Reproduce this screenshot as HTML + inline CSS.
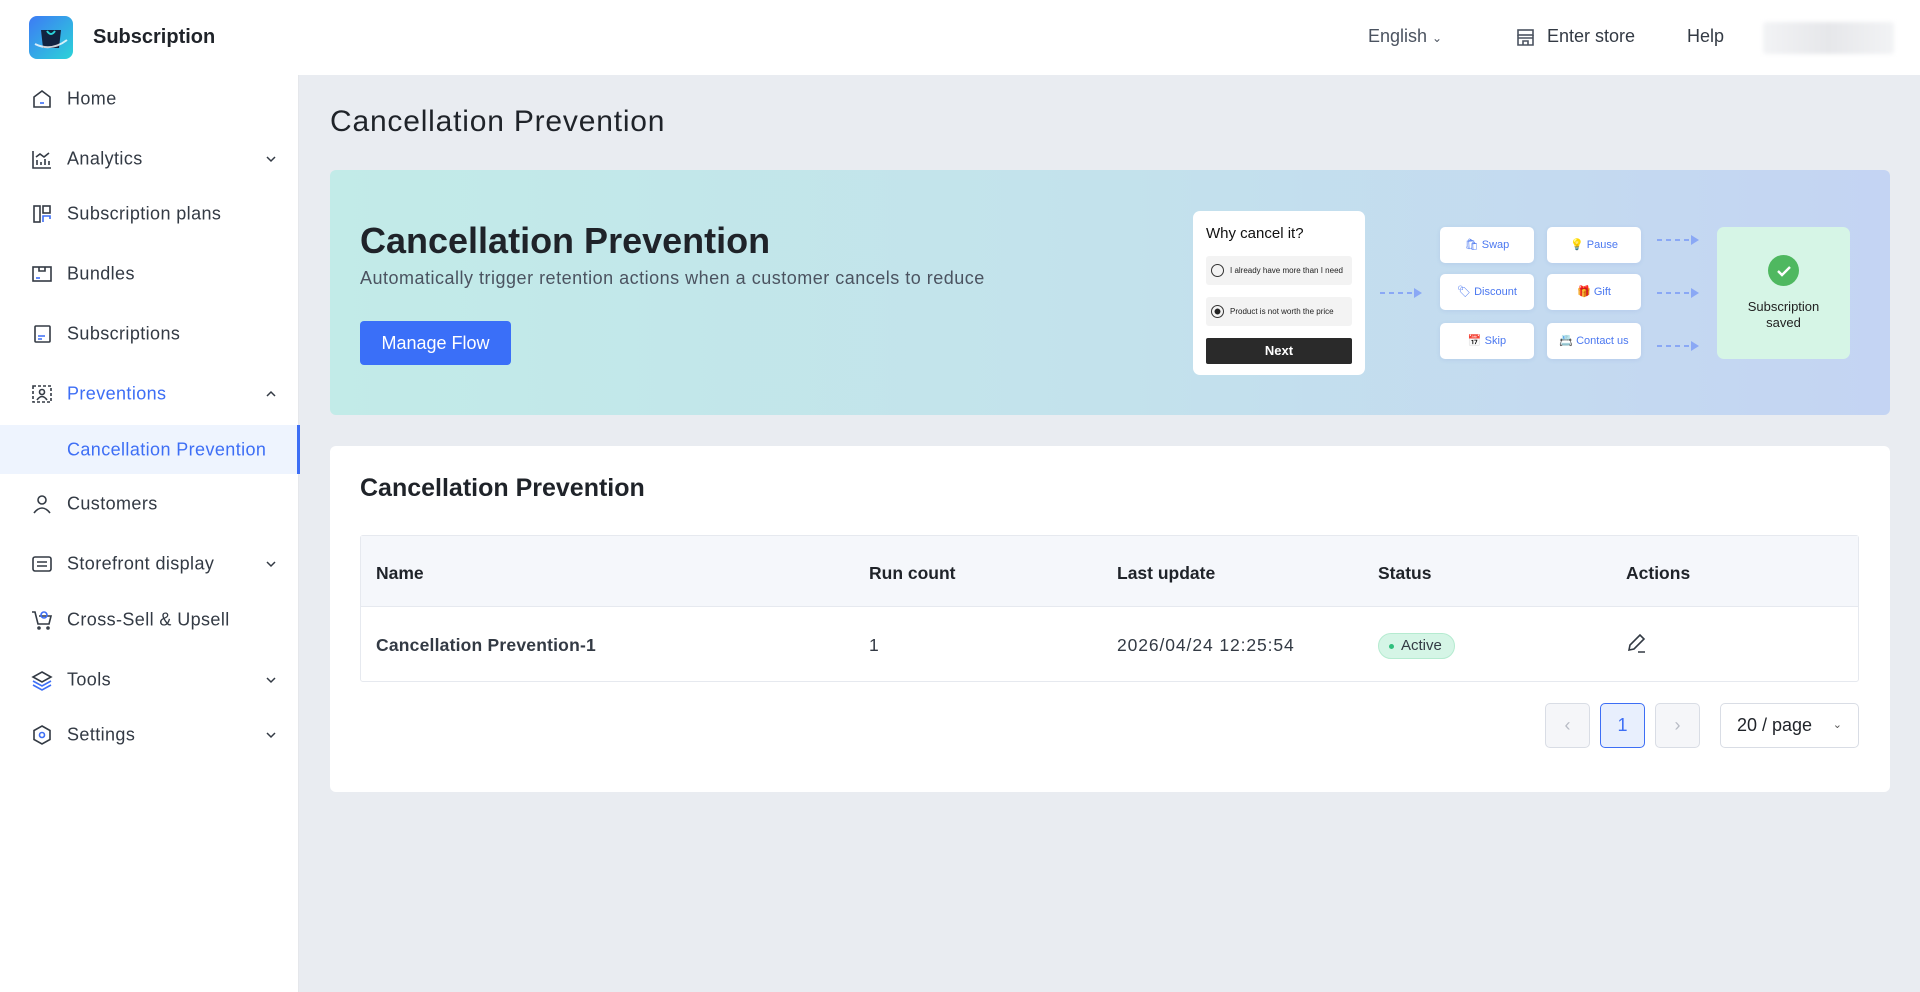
<!DOCTYPE html>
<html><head><meta charset="utf-8"><style>
*{box-sizing:border-box;margin:0;padding:0}
body{width:1920px;height:992px;overflow:hidden;font-family:"Liberation Sans",sans-serif;background:#e9ecf1;color:#1f2329;position:relative}
.hdr{position:absolute;left:0;top:0;width:1920px;height:75px;background:#fff}
.logo{position:absolute;left:29px;top:16px;width:44px;height:43px;border-radius:8px;background:linear-gradient(135deg,#3d7bf5,#2bd3d8)}
.brand{position:absolute;left:93px;top:26px;font-size:20px;font-weight:bold;color:#1f2329}
.hr{position:absolute;top:26px;font-size:18px;color:#333a44}
.side{position:absolute;left:0;top:75px;width:299px;height:917px;background:#fff;border-right:1px solid #e5e7eb}
.mi{position:absolute;left:0;width:299px;height:40px;font-size:18px;letter-spacing:0.4px;color:#333a44}
.mi span.t{position:absolute;left:67px;top:50%;transform:translateY(-50%)}
.mi svg.ic{position:absolute;left:31px;top:50%;margin-top:-11px}
.mi .chev{position:absolute;left:265px;top:50%;margin-top:-6px}
.main-title{position:absolute;left:330px;top:105px;font-size:30px;letter-spacing:0.8px;color:#1f2329}
.banner{position:absolute;left:330px;top:170px;width:1560px;height:245px;border-radius:6px;background:linear-gradient(90deg,#c2ebe8 0%,#c3e2ec 50%,#c4d4f3 100%)}
.card{position:absolute;left:330px;top:446px;width:1560px;height:346px;background:#fff;border-radius:6px}
.box{position:absolute;background:#fff;border-radius:5px;font-size:11px;color:#4b78f0;text-align:center;line-height:37px;box-shadow:0 1px 4px rgba(80,110,200,.12)}
.arrow{position:absolute;width:44px;height:10px}
.th{position:absolute;top:27px;font-size:17.5px;font-weight:bold;color:#1f2329}
.td{position:absolute;top:28px;font-size:17.5px;letter-spacing:0.3px;color:#333a44}
.pg{position:absolute;top:703px;height:45px;border:1px solid #d9dde5;border-radius:5px;background:#f5f6f9;text-align:center;line-height:43px;font-size:18px}
</style></head><body>
<div class="hdr">
 <div class="logo"><svg width="44" height="43" viewBox="0 0 44 43"><path d="M12 14h20l-2 18H14z" fill="#12233f"/><path d="M18 15q4 6 8 0" stroke="#2bd3d8" stroke-width="2" fill="none"/><path d="M6 28q16 8 32-4" stroke="#fff" stroke-width="2" fill="none" opacity=".8"/></svg></div>
 <div class="brand">Subscription</div>
 <div class="hr" style="left:1368px;color:#4b5360">English <span style="font-size:12px">&#8964;</span></div>
 <svg style="position:absolute;left:1516px;top:28px" width="19" height="19" viewBox="0 0 19 19" fill="none" stroke="#4b5360" stroke-width="1.6"><rect x="2" y="2" width="15" height="5"/><path d="M2 7v10h15V7M2 10h15M7 17v-4h5v4"/></svg>
 <div class="hr" style="left:1547px">Enter store</div>
 <div class="hr" style="left:1687px">Help</div>
 <div style="position:absolute;left:1763px;top:22px;width:131px;height:32px;background:linear-gradient(90deg,#f2f3f5,#e6e7ea 50%,#f2f3f5);border-radius:3px;filter:blur(2px)"></div>
</div>
<div class="side">
 <div class="mi" style="top:4px"><svg class="ic" width="22" height="22" viewBox="0 0 22 22" fill="none" stroke="#333a44" stroke-width="1.6"><path d="M3 9l8-6 8 6v10H3z"/><path d="M9 15h4" stroke="#3d6ef5"/></svg><span class="t">Home</span></div>
 <div class="mi" style="top:64px"><svg class="ic" width="22" height="22" viewBox="0 0 22 22" fill="none" stroke="#333a44" stroke-width="1.6"><path d="M2 3v17h18M6 17v-5M10 17v-3M14 17v-6M18 17v-4M5 9l4-3 4 3 5-4"/></svg><span class="t">Analytics</span><svg class="chev" width="12" height="12" viewBox="0 0 12 12"><path d="M2 4l4 4 4-4" stroke="#333a44" stroke-width="1.5" fill="none"/></svg></div>
 <div class="mi" style="top:119px"><svg class="ic" width="22" height="22" viewBox="0 0 22 22" fill="none" stroke="#333a44" stroke-width="1.6"><rect x="3" y="3" width="6" height="16"/><rect x="12" y="3" width="7" height="7"/><path d="M12 19v-6h7v3" stroke="#3d6ef5"/></svg><span class="t">Subscription plans</span></div>
 <div class="mi" style="top:179px"><svg class="ic" width="22" height="22" viewBox="0 0 22 22" fill="none" stroke="#333a44" stroke-width="1.6"><rect x="2" y="4" width="18" height="14"/><path d="M8 4v4h6V4"/><path d="M5 15h4" stroke="#3d6ef5"/></svg><span class="t">Bundles</span></div>
 <div class="mi" style="top:239px"><svg class="ic" width="22" height="22" viewBox="0 0 22 22" fill="none" stroke="#333a44" stroke-width="1.6"><rect x="4" y="3" width="15" height="16" rx="1"/><path d="M7 13h7M7 16h4" stroke="#3d6ef5"/></svg><span class="t">Subscriptions</span></div>
 <div class="mi" style="top:299px;color:#3d6ef5"><svg class="ic" width="22" height="22" viewBox="0 0 22 22" fill="none" stroke="#333a44" stroke-width="1.6"><rect x="2" y="3" width="18" height="16" stroke-dasharray="3 2"/><circle cx="11" cy="9" r="2.5"/><path d="M6 17q5-7 10 0"/></svg><span class="t">Preventions</span><svg class="chev" width="12" height="12" viewBox="0 0 12 12"><path d="M2 8l4-4 4 4" stroke="#333a44" stroke-width="1.5" fill="none"/></svg></div>
 <div class="mi" style="top:350px;height:49px;background:#eef4fe;color:#3d6ef5;border-right:3px solid #3d6ef5;width:300px"><span class="t">Cancellation Prevention</span></div>
 <div class="mi" style="top:409px"><svg class="ic" width="22" height="22" viewBox="0 0 22 22" fill="none" stroke="#333a44" stroke-width="1.6"><circle cx="11" cy="7" r="4"/><path d="M3 20q8-10 16 0"/></svg><span class="t">Customers</span></div>
 <div class="mi" style="top:469px"><svg class="ic" width="22" height="22" viewBox="0 0 22 22" fill="none" stroke="#333a44" stroke-width="1.6"><rect x="2" y="4" width="18" height="14" rx="2"/><path d="M6 9h10M6 13h10"/></svg><span class="t">Storefront display</span><svg class="chev" width="12" height="12" viewBox="0 0 12 12"><path d="M2 4l4 4 4-4" stroke="#333a44" stroke-width="1.5" fill="none"/></svg></div>
 <div class="mi" style="top:525px"><svg class="ic" width="22" height="22" viewBox="0 0 22 22" fill="none" stroke="#333a44" stroke-width="1.6"><path d="M1 3h3l3 12h11l2-8H8"/><circle cx="13" cy="6" r="3" stroke="#3d6ef5"/><circle cx="8" cy="19" r="1"/><circle cx="17" cy="19" r="1"/></svg><span class="t">Cross-Sell &amp; Upsell</span></div>
 <div class="mi" style="top:585px"><svg class="ic" width="22" height="22" viewBox="0 0 22 22" fill="none" stroke="#333a44" stroke-width="1.6"><path d="M11 3l9 5-9 5-9-5z"/><path d="M2 12l9 5 9-5M2 16l9 5 9-5" stroke="#3d6ef5"/></svg><span class="t">Tools</span><svg class="chev" width="12" height="12" viewBox="0 0 12 12"><path d="M2 4l4 4 4-4" stroke="#333a44" stroke-width="1.5" fill="none"/></svg></div>
 <div class="mi" style="top:640px"><svg class="ic" width="22" height="22" viewBox="0 0 22 22" fill="none" stroke="#333a44" stroke-width="1.6"><path d="M11 2l8 4.5v9L11 20l-8-4.5v-9z"/><circle cx="11" cy="11" r="2.5" stroke="#3d6ef5"/></svg><span class="t">Settings</span><svg class="chev" width="12" height="12" viewBox="0 0 12 12"><path d="M2 4l4 4 4-4" stroke="#333a44" stroke-width="1.5" fill="none"/></svg></div>
</div>
<div class="main-title">Cancellation Prevention</div>
<div class="banner">
 <div style="position:absolute;left:30px;top:50px;font-size:36px;font-weight:bold;color:#1f2329">Cancellation Prevention</div>
 <div style="position:absolute;left:30px;top:98px;font-size:18px;letter-spacing:0.5px;color:#4b5360">Automatically trigger retention actions when a customer cancels to reduce</div>
 <div style="position:absolute;left:30px;top:151px;width:151px;height:44px;border-radius:4px;background:#3a6ff8;color:#fff;font-size:18px;text-align:center;line-height:44px">Manage Flow</div>
 <div style="position:absolute;left:863px;top:41px;width:172px;height:164px;background:#fff;border-radius:7px">
  <div style="position:absolute;left:13px;top:14px;font-size:15px;color:#111">Why cancel it?</div>
  <div style="position:absolute;left:13px;top:45px;width:146px;height:29px;background:#f3f3f3;border-radius:3px;font-size:8px;line-height:29px;padding-left:24px;color:#222">I already have more than I need<span style="position:absolute;left:5px;top:8px;width:13px;height:13px;border:1px solid #333;border-radius:50%"></span></div>
  <div style="position:absolute;left:13px;top:86px;width:146px;height:29px;background:#f3f3f3;border-radius:3px;font-size:8px;line-height:29px;padding-left:24px;color:#222">Product is not worth the price<span style="position:absolute;left:5px;top:8px;width:13px;height:13px;border:1px solid #333;border-radius:50%;background:radial-gradient(#222 35%,transparent 40%)"></span></div>
  <div style="position:absolute;left:13px;top:127px;width:146px;height:26px;background:#2a2a2a;border-radius:2px;color:#fff;font-size:13px;font-weight:bold;text-align:center;line-height:26px">Next</div>
 </div>
 <svg class="arrow" style="left:1050px;top:118px" viewBox="0 0 44 10"><path d="M0 5h34" stroke="#8aa8f5" stroke-width="2" stroke-dasharray="5 4"/><path d="M34 0l8 5-8 5z" fill="#8aa8f5"/></svg>
 <div class="box" style="left:1110px;top:57px;width:94px;height:36px">🛍 Swap</div>
 <div class="box" style="left:1217px;top:57px;width:94px;height:36px">💡 Pause</div>
 <div class="box" style="left:1110px;top:104px;width:94px;height:36px">🏷 Discount</div>
 <div class="box" style="left:1217px;top:104px;width:94px;height:36px">🎁 Gift</div>
 <div class="box" style="left:1110px;top:153px;width:94px;height:36px">📅 Skip</div>
 <div class="box" style="left:1217px;top:153px;width:94px;height:36px">📇 Contact us</div>
 <svg class="arrow" style="left:1327px;top:65px" viewBox="0 0 44 10"><path d="M0 5h34" stroke="#8aa8f5" stroke-width="2" stroke-dasharray="5 4"/><path d="M34 0l8 5-8 5z" fill="#8aa8f5"/></svg>
 <svg class="arrow" style="left:1327px;top:118px" viewBox="0 0 44 10"><path d="M0 5h34" stroke="#8aa8f5" stroke-width="2" stroke-dasharray="5 4"/><path d="M34 0l8 5-8 5z" fill="#8aa8f5"/></svg>
 <svg class="arrow" style="left:1327px;top:171px" viewBox="0 0 44 10"><path d="M0 5h34" stroke="#8aa8f5" stroke-width="2" stroke-dasharray="5 4"/><path d="M34 0l8 5-8 5z" fill="#8aa8f5"/></svg>
 <div style="position:absolute;left:1387px;top:57px;width:133px;height:132px;background:#d6f5e6;border-radius:7px;text-align:center">
  <div style="position:absolute;left:51px;top:28px;width:31px;height:31px;border-radius:50%;background:#4fb860"><svg width="31" height="31" viewBox="0 0 31 31"><path d="M10 16l4 4 8-8" stroke="#fff" stroke-width="2.4" fill="none"/></svg></div>
  <div style="position:absolute;left:0;right:0;top:72px;font-size:13px;color:#222;line-height:16px">Subscription<br>saved</div>
 </div>
</div>
<div class="card">
 <div style="position:absolute;left:30px;top:28px;font-size:25px;font-weight:bold;color:#1f2329">Cancellation Prevention</div>
 <div style="position:absolute;left:30px;top:89px;width:1499px;height:147px;border:1px solid #e6e9ef;border-radius:3px">
  <div style="position:absolute;left:0;top:0;width:1497px;height:71px;background:#f5f7fb;border-bottom:1px solid #e6e9ef">
   <div class="th" style="left:15px">Name</div><div class="th" style="left:508px">Run count</div><div class="th" style="left:756px">Last update</div><div class="th" style="left:1017px">Status</div><div class="th" style="left:1265px">Actions</div>
  </div>
  <div style="position:absolute;left:0;top:71px;width:1497px;height:75px">
   <div class="td" style="left:15px;font-weight:bold;letter-spacing:0.2px">Cancellation Prevention-1</div>
   <div class="td" style="left:508px">1</div>
   <div class="td" style="left:756px;letter-spacing:0.9px">2026/04/24 12:25:54</div>
   <div style="position:absolute;left:1017px;top:26px;width:77px;height:26px;border-radius:13px;background:#d5f5e6;border:1px solid #b5ebd0;font-size:15px;line-height:24px;color:#333a44;padding-left:22px">Active<span style="position:absolute;left:10px;top:10px;width:5px;height:5px;border-radius:50%;background:#2fbf7c"></span></div>
   <svg style="position:absolute;left:1265px;top:25px" width="22" height="22" viewBox="0 0 22 22" fill="none" stroke="#333a44" stroke-width="1.6"><path d="M3 18l1-5L14 3l4 4L8 17zM12 20h7"/></svg>
  </div>
 </div>
</div>
<div class="pg" style="left:1545px;width:45px;color:#b8bcc5">&#8249;</div>
<div class="pg" style="left:1600px;width:45px;background:#e8effd;border-color:#3d6ef5;color:#3d6ef5">1</div>
<div class="pg" style="left:1655px;width:45px;color:#b8bcc5">&#8250;</div>
<div class="pg" style="left:1720px;width:139px;background:#fff;color:#1f2329;text-align:left;padding-left:16px">20 / page <span style="position:absolute;right:16px;font-size:11px;color:#555">&#8964;</span></div>
</body></html>
